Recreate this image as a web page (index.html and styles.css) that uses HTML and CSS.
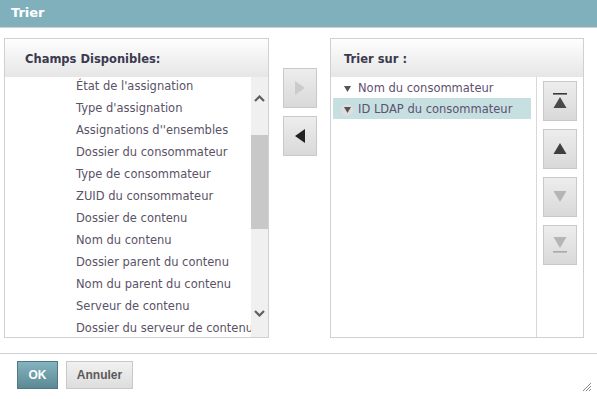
FILE: index.html
```html
<!DOCTYPE html>
<html lang="fr">
<head>
<meta charset="utf-8">
<title>Trier</title>
<link rel="stylesheet" href="styles.css">
</head>
<body>
<div class="dialog">
  <div class="titlebar">Trier</div>
  <div class="content">
    <section class="panel panel-left">
      <div class="panel-header">Champs Disponibles:</div>
      <div class="panel-body">
        <ul class="field-list">
          <li>État de l'assignation</li>
          <li>Type d'assignation</li>
          <li>Assignations d''ensembles</li>
          <li>Dossier du consommateur</li>
          <li>Type de consommateur</li>
          <li>ZUID du consommateur</li>
          <li>Dossier de contenu</li>
          <li>Nom du contenu</li>
          <li>Dossier parent du contenu</li>
          <li>Nom du parent du contenu</li>
          <li>Serveur de contenu</li>
          <li>Dossier du serveur de contenu</li>
        </ul>
        <div class="scrollbar">
          <div class="sb-up">
            <svg width="11" height="7" viewBox="0 0 11 7"><path d="M1 6 L5.5 1.5 L10 6" fill="none" stroke="#5f5f5f" stroke-width="2.2"/></svg>
          </div>
          <div class="sb-thumb"></div>
          <div class="sb-down">
            <svg width="11" height="7" viewBox="0 0 11 7"><path d="M1 1 L5.5 5.5 L10 1" fill="none" stroke="#5f5f5f" stroke-width="2.2"/></svg>
          </div>
        </div>
      </div>
    </section>

    <div class="move-buttons">
      <button class="btn-icon" type="button" aria-label="Ajouter">
        <svg width="12" height="14" viewBox="0 0 12 14"><path d="M1 0 L11 7 L1 14 Z" fill="#cbcbcb"/></svg>
      </button>
      <button class="btn-icon" type="button" aria-label="Retirer">
        <svg width="12" height="14" viewBox="0 0 12 14"><path d="M11 0 L1 7 L11 14 Z" fill="#222"/></svg>
      </button>
    </div>

    <section class="panel panel-right">
      <div class="panel-header">Trier sur :</div>
      <div class="panel-body">
        <ul class="sort-list">
          <li><span class="sort-ico"><svg width="7" height="6" viewBox="0 0 7 6"><path d="M0 0 H7 L3.5 6 Z" fill="#555"/></svg></span>Nom du consommateur</li>
          <li class="selected"><span class="sort-ico"><svg width="7" height="6" viewBox="0 0 7 6"><path d="M0 0 H7 L3.5 6 Z" fill="#555"/></svg></span>ID LDAP du consommateur</li>
        </ul>
        <div class="order-buttons">
          <button class="btn-icon" type="button" aria-label="Premier">
            <svg width="14" height="16" viewBox="0 0 14 16"><rect x="0" y="0" width="14" height="1.6" fill="#3a3a3a"/><path d="M7 4 L13.5 15 H0.5 Z" fill="#4a4a4a"/></svg>
          </button>
          <button class="btn-icon" type="button" aria-label="Monter">
            <svg width="14" height="12" viewBox="0 0 14 12"><path d="M7 0 L13.5 11 H0.5 Z" fill="#3e3e3e"/></svg>
          </button>
          <button class="btn-icon" type="button" aria-label="Descendre">
            <svg width="14" height="12" viewBox="0 0 14 12"><path d="M0.5 0 H13.5 L7 11 Z" fill="#b5b5b5"/></svg>
          </button>
          <button class="btn-icon" type="button" aria-label="Dernier">
            <svg width="14" height="16" viewBox="0 0 14 16"><path d="M0.5 0 H13.5 L7 11 Z" fill="#b5b5b5"/><rect x="0" y="14" width="14" height="1.6" fill="#a9a9a9"/></svg>
          </button>
        </div>
      </div>
    </section>
  </div>
  <div class="footer">
    <button class="btn btn-primary" type="button">OK</button>
    <button class="btn btn-secondary" type="button">Annuler</button>
    <span class="grip">
      <svg width="10" height="10" viewBox="0 0 10 10">
        <g fill="#8a8a8a">
          <rect x="8" y="1" width="1" height="1"/><rect x="7" y="2" width="1" height="1"/><rect x="6" y="3" width="1" height="1"/><rect x="5" y="4" width="1" height="1"/><rect x="4" y="5" width="1" height="1"/><rect x="3" y="6" width="1" height="1"/><rect x="2" y="7" width="1" height="1"/><rect x="1" y="8" width="1" height="1"/>
          <rect x="8" y="4" width="1" height="1"/><rect x="7" y="5" width="1" height="1"/><rect x="6" y="6" width="1" height="1"/><rect x="5" y="7" width="1" height="1"/><rect x="4" y="8" width="1" height="1"/>
          <rect x="8" y="7" width="1" height="1"/><rect x="7" y="8" width="1" height="1"/>
        </g>
      </svg>
    </span>
  </div>
</div>
</body>
</html>
```

FILE: styles.css
```css
html, body {
  margin: 0;
  padding: 0;
  background: #fff;
}
body {
  font-family: "DejaVu Sans", Verdana, sans-serif;
  font-size: 11.5px;
  color: #5a5266;
}
.dialog {
  width: 597px;
  height: 399px;
  display: flex;
  flex-direction: column;
  overflow: hidden;
}
.titlebar {
  height: 28px;
  background: #80b0bc;
  border-bottom: 1px solid #d0d0d0;
  color: #fff;
  font-weight: bold;
  font-size: 13px;
  line-height: 26px;
  padding-left: 11px;
  box-sizing: border-box;
  flex: none;
}
.content {
  display: flex;
  align-items: flex-start;
  padding: 10px 0 0 4px;
  height: 325px;
  box-sizing: border-box;
  flex: none;
}
.panel {
  border: 1px solid #d0d0d0;
  height: 300px;
  box-sizing: border-box;
  display: flex;
  flex-direction: column;
  background: #fff;
}
.panel-left { width: 265px; }
.panel-right { width: 254px; margin-left: 13px; }
.panel-header {
  height: 38px;
  flex: none;
  background: linear-gradient(#fefefe, #e6e6e6);
  font-weight: bold;
  font-size: 11.5px;
  color: #3b3a4e;
  line-height: 41px;
  padding-left: 20px;
}
.panel-right .panel-header { padding-left: 13px; }
.panel-body {
  flex: 1;
  display: flex;
  overflow: hidden;
  min-height: 0;
}
.field-list {
  list-style: none;
  margin: -2px 0 0 0;
  padding: 0 0 0 71px;
  flex: 1;
  min-width: 0;
  overflow: hidden;
}
.field-list li {
  height: 22px;
  line-height: 22px;
  white-space: nowrap;
}
.scrollbar {
  width: 17px;
  flex: none;
  background: #f0f0f0;
  display: flex;
  flex-direction: column;
  align-items: center;
}
.sb-up {
  height: 25px;
  display: flex;
  align-items: flex-end;
  justify-content: center;
  width: 100%;
}
.sb-thumb {
  width: 100%;
  height: 94px;
  background: #c8c8c8;
  margin-top: 33px;
}
.sb-down {
  margin-top: auto;
  height: 27px;
  display: flex;
  align-items: flex-start;
  justify-content: center;
  width: 100%;
}
.move-buttons {
  display: flex;
  flex-direction: column;
  gap: 8px;
  margin: 30px 0 0 14px;
}
.btn-icon {
  width: 34px;
  height: 40px;
  padding: 0;
  border: 1px solid #c9c9c9;
  background: linear-gradient(#ededed, #d9d9d9);
  display: flex;
  align-items: center;
  justify-content: center;
  box-sizing: border-box;
}
.sort-list {
  list-style: none;
  margin: 0;
  padding: 0 5px 0 2px;
  width: 206px;
  flex: none;
  box-sizing: border-box;
  border-right: 1px solid #d8d8d8;
}
.sort-list li {
  box-sizing: border-box;
  height: 21px;
  line-height: 19px;
  white-space: nowrap;
  display: flex;
  align-items: center;
  padding: 2px 0 0 9px;
  color: #5f5070;
}
.sort-list li.selected {
  background: #c6e0e1;
}
.sort-ico {
  width: 12px;
  height: 12px;
  border-radius: 50%;
  display: flex;
  align-items: center;
  justify-content: center;
  margin-right: 5px;
  margin-left: -1px;
}
.sort-list li.selected .sort-ico { background: #dedede; }
.order-buttons {
  display: flex;
  flex-direction: column;
  gap: 8px;
  padding: 4px 0 0 6px;
}
.footer {
  border-top: 1px solid #d0d0d0;
  flex: 1;
  display: flex;
  align-items: flex-start;
  padding: 7px 0 0 17px;
  gap: 8px;
  position: relative;
}
.btn {
  height: 28px;
  font-family: "Liberation Sans", Arial, sans-serif;
  font-weight: bold;
  font-size: 12px;
  box-sizing: border-box;
  padding: 0;
}
.btn-primary {
  width: 41px;
  color: #fff;
  background: linear-gradient(#84b4bf, #5b8894);
  border: 1px solid #4e7984;
}
.btn-secondary {
  width: 67px;
  color: #5a5a5a;
  background: linear-gradient(#f1f1f1, #dddddd);
  border: 1px solid #c8c8c8;
}
.grip {
  position: absolute;
  right: 5px;
  bottom: 7px;
  width: 10px;
  height: 10px;
  display: block;
  line-height: 0;
}
```
